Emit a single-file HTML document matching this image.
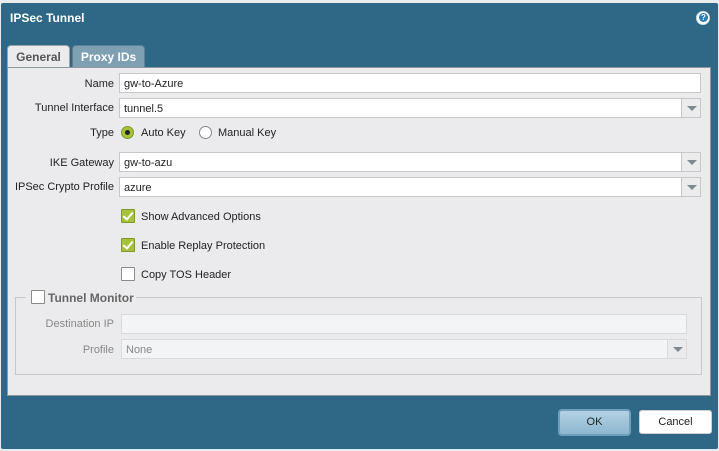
<!DOCTYPE html>
<html><head><style>
*{box-sizing:border-box;margin:0;padding:0}
body{width:719px;height:451px;background:#e8ecef;font-family:"Liberation Sans",Tahoma,sans-serif;font-size:11px;color:#222;position:relative;overflow:hidden}
.dlg{position:absolute;left:1px;top:3px;width:717px;height:446px;background:#2f6886;border-radius:2px}
.abs{position:absolute}
.title{left:9px;top:8px;color:#fff;font-weight:bold;font-size:12px}
.help{left:695px;top:8px;width:14px;height:14px;border-radius:50%;background:#fff;border:1px solid #cfe3ef}
.help span{position:absolute;left:2px;top:1px;width:9px;height:9px;border-radius:50%;background:#2a7ab8;color:#fff;font-size:8px;font-weight:bold;line-height:9px;text-align:center}
.tab{top:42px;height:22px;border-radius:4px 4px 0 0;font-weight:bold;font-size:12px;padding:4px 0 0;text-align:center}
.panel{left:6px;top:64px;width:704px;height:329px;background:#ebebed;border:1px solid #8f989d}
.lbl{text-align:right;width:110px;left:4px;font-size:11px;color:#222}
.inp{left:119px;width:582px;height:20px;background:#fff;border:1px solid #c8c8c8;padding:4px 4px 0;font-size:11px}
.dd{position:absolute;right:0;top:0;width:19px;height:18px;background:#ececec;border-left:1px solid #c8c8c8}
.dd:after{content:"";position:absolute;left:5px;top:7px;border-left:5px solid transparent;border-right:5px solid transparent;border-top:5px solid #7d8a92}
.cb{width:14px;height:14px;border:1px solid #8a8a8a;background:#fff;border-radius:1px}
.cb.on{background:#a6c23a;border-color:#7f9a2a}
.cb.on:after{content:"";position:absolute;left:3px;top:0px;width:4px;height:8px;border:solid #fff;border-width:0 2px 2px 0;transform:rotate(40deg)}
.rad{width:13px;height:13px;border-radius:50%;border:1px solid #888;background:#fff}
.rad.on{background:#a6c23a;border-color:#7f9a2a}
.rad.on:after{content:"";position:absolute;left:3px;top:3px;width:5px;height:5px;border-radius:50%;background:#222}
.dis{color:#888}
</style></head><body>
<div class="dlg">
<div class="abs title">IPSec Tunnel</div>
<div class="abs help"><span>?</span></div>
<div class="abs tab" style="left:6px;width:63px;background:#ebebed;color:#555;border:1px solid #9aa3a8;border-bottom:none;height:23px">General</div>
<div class="abs tab" style="left:71px;width:73px;background:#7f9fb3;color:#fff;border:1px solid #5d7f94;border-bottom:none">Proxy IDs</div>
<div class="abs panel"></div>
</div>
<div class="abs lbl" style="top:78px">Name</div>
<div class="abs inp" style="top:73px">gw-to-Azure</div>
<div class="abs lbl" style="top:102px">Tunnel Interface</div>
<div class="abs inp" style="top:98px">tunnel.5<div class="dd"></div></div>
<div class="abs lbl" style="top:127px">Type</div>
<div class="abs rad on" style="left:121px;top:126px"></div>
<div class="abs" style="left:141px;top:127px">Auto Key</div>
<div class="abs rad" style="left:199px;top:126px"></div>
<div class="abs" style="left:218px;top:127px">Manual Key</div>
<div class="abs lbl" style="top:157px">IKE Gateway</div>
<div class="abs inp" style="top:152px">gw-to-azu<div class="dd"></div></div>
<div class="abs lbl" style="top:181px">IPSec Crypto Profile</div>
<div class="abs inp" style="top:177px">azure<div class="dd"></div></div>
<div class="abs cb on" style="left:121px;top:209px"></div>
<div class="abs" style="left:141px;top:211px">Show Advanced Options</div>
<div class="abs cb on" style="left:121px;top:238px"></div>
<div class="abs" style="left:141px;top:240px">Enable Replay Protection</div>
<div class="abs cb" style="left:121px;top:267px"></div>
<div class="abs" style="left:141px;top:269px">Copy TOS Header</div>
<div class="abs" style="left:15px;top:297px;width:687px;height:78px;border:1px solid #c8c8c8"></div>
<div class="abs" style="left:26px;top:290px;width:110px;height:14px;background:#ebebed"></div>
<div class="abs cb" style="left:31px;top:290px"></div>
<div class="abs" style="left:48px;top:291px;font-weight:bold;font-size:12px;color:#666">Tunnel Monitor</div>
<div class="abs lbl dis" style="top:318px">Destination IP</div>
<div class="abs inp" style="top:314px;left:121px;width:566px;background:#f3f4f5;border-color:#dadada"></div>
<div class="abs lbl dis" style="top:344px">Profile</div>
<div class="abs inp dis" style="top:339px;left:121px;width:566px;background:#f3f4f5;border-color:#dadada">None<div class="dd" style="background:#ebebed;border-color:#dadada"></div></div>
<div class="abs" style="left:558px;top:409px;width:73px;height:27px;border-radius:4px;background:linear-gradient(#b4d2e4,#8db7d0);border:2px solid #6f9fbd;text-align:center;line-height:23px;color:#222">OK</div>
<div class="abs" style="left:639px;top:410px;width:73px;height:24px;border-radius:3px;background:#fff;border:1px solid #d0d0d0;text-align:center;line-height:22px;color:#222">Cancel</div>
</body></html>
